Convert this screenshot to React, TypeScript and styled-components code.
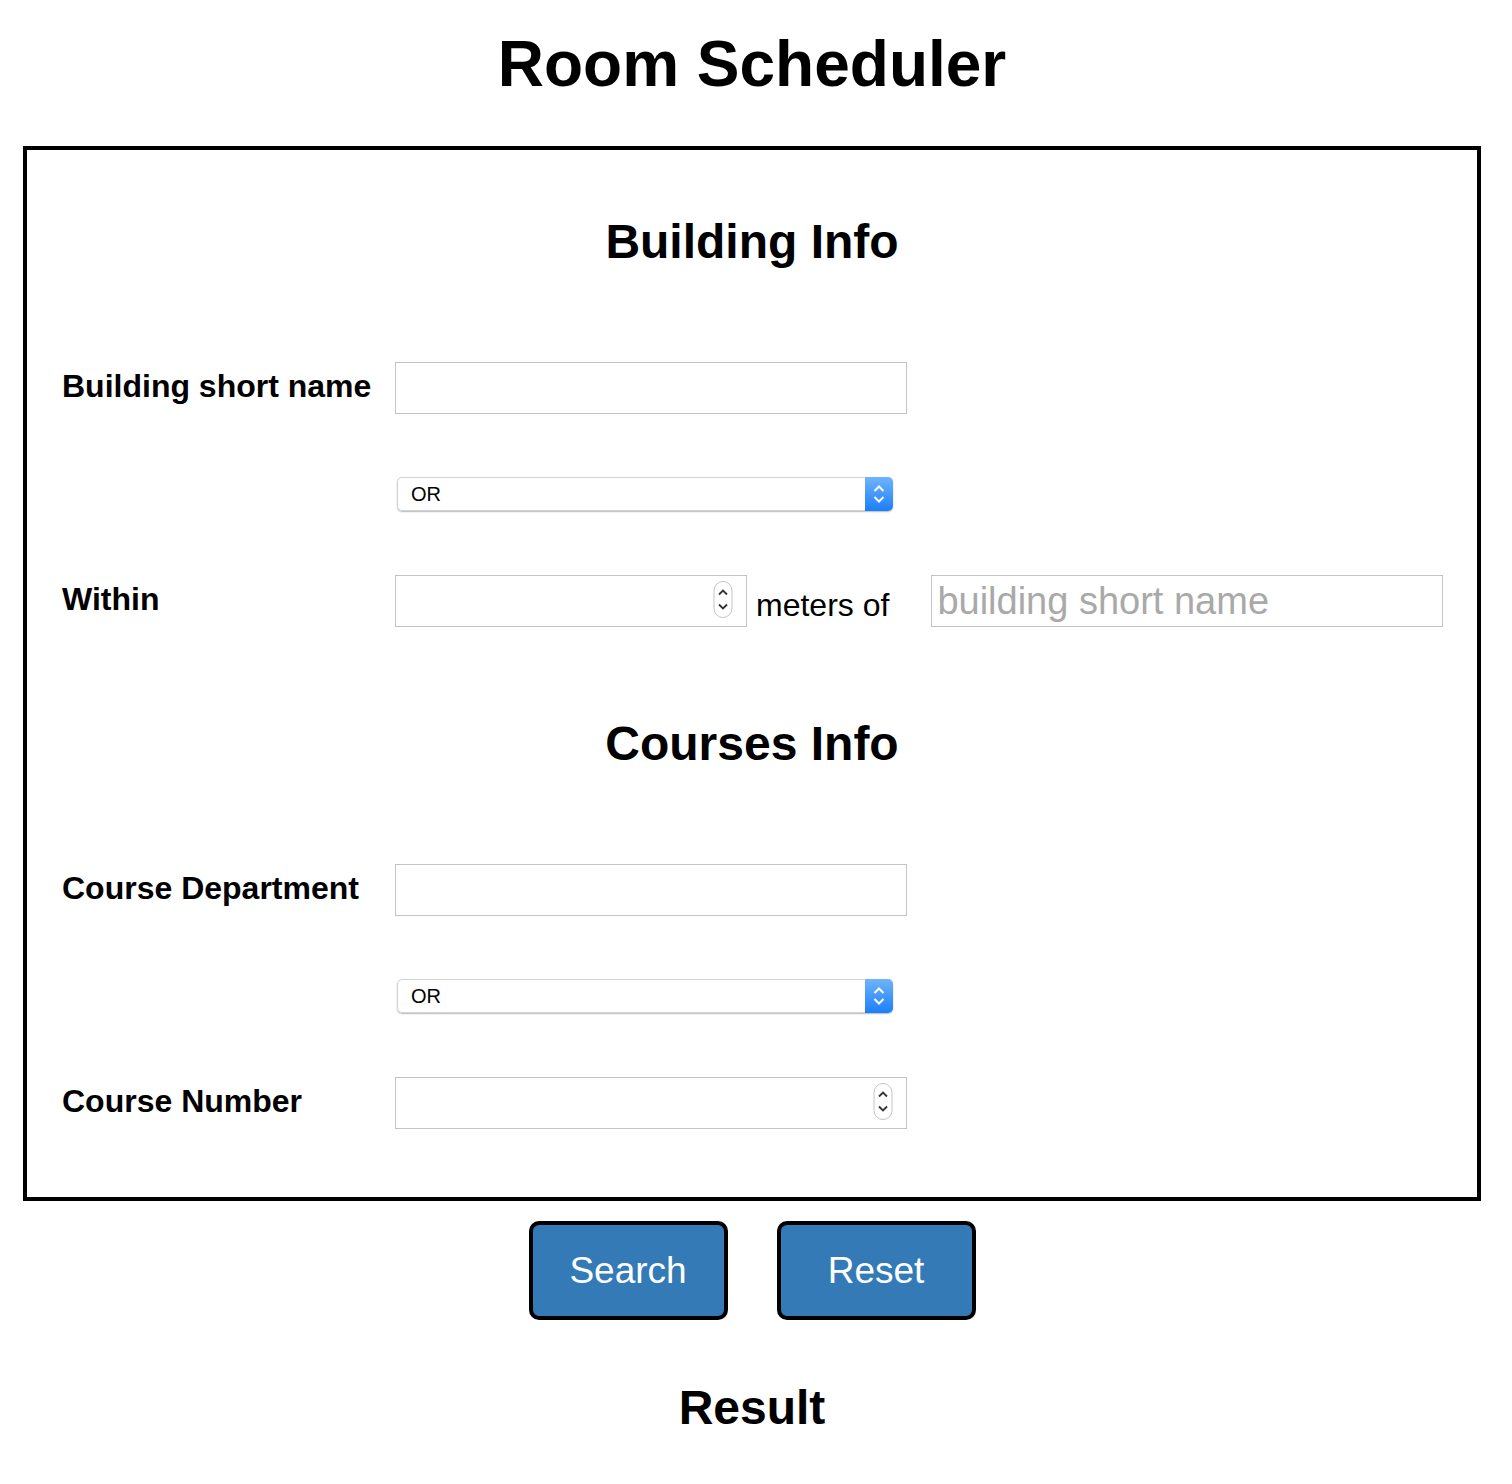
import React, { ReactElement } from 'react';
import styled, { createGlobalStyle } from 'styled-components';

const GlobalStyle = createGlobalStyle`
  html, body {
    margin: 0;
    padding: 0;
    background: #ffffff;
  }
  body {
    font-family: 'Liberation Sans', Arial, sans-serif;
    color: #000000;
  }
`;

const Spinner = (): ReactElement => (
  <SpinnerBox>
    <svg width="20" height="37" viewBox="0 0 20 37">
      <rect x="1" y="0.5" width="18" height="36" rx="9" fill="#ffffff" stroke="#c4c4c4" />
      <path d="M6 13.5 L10 9.5 L14 13.5" fill="none" stroke="#333333" strokeWidth="1.8" />
      <path d="M6 23.5 L10 27.5 L14 23.5" fill="none" stroke="#333333" strokeWidth="1.8" />
    </svg>
  </SpinnerBox>
);

const OrSelect = (): ReactElement => (
  <SelectWrap>
    <NativeSelect defaultValue="OR">
      <option value="OR">OR</option>
      <option value="AND">AND</option>
    </NativeSelect>
    <SelectArrows>
      <svg width="28" height="34" viewBox="0 0 28 34">
        <path d="M9.5 14 L14 9.5 L18.5 14" fill="none" stroke="#ffffff" strokeWidth="2" />
        <path d="M9.5 20 L14 24.5 L18.5 20" fill="none" stroke="#ffffff" strokeWidth="2" />
      </svg>
    </SelectArrows>
  </SelectWrap>
);

const App = (): ReactElement => {
  return (
    <Page>
      <GlobalStyle />
      <PageTitle>Room Scheduler</PageTitle>
      <Frame>
        <SectionTitle $top={64}>Building Info</SectionTitle>
        <FormRow $gap={92}>
          <FieldLabel>Building short name</FieldLabel>
          <TextInput type="text" />
        </FormRow>
        <FormRow $gap={63}>
          <FieldLabel />
          <OrSelect />
        </FormRow>
        <FormRow $gap={64}>
          <FieldLabel>Within</FieldLabel>
          <NumberWrap $width={352}>
            <TextInput type="text" $width={352} />
            <Spinner />
          </NumberWrap>
          <MetersText>meters of</MetersText>
          <TextInput type="text" placeholder="building short name" $big />
        </FormRow>

        <SectionTitle $top={89}>Courses Info</SectionTitle>
        <FormRow $gap={92}>
          <FieldLabel>Course Department</FieldLabel>
          <TextInput type="text" />
        </FormRow>
        <FormRow $gap={63}>
          <FieldLabel />
          <OrSelect />
        </FormRow>
        <FormRow $gap={64}>
          <FieldLabel>Course Number</FieldLabel>
          <NumberWrap $width={512}>
            <TextInput type="text" />
            <Spinner />
          </NumberWrap>
        </FormRow>
      </Frame>
      <ButtonBar>
        <ActionButton type="button">Search</ActionButton>
        <ActionButton type="button">Reset</ActionButton>
      </ButtonBar>
      <ResultTitle>Result</ResultTitle>
    </Page>
  );
};

const Page = styled.div`
  width: 1512px;
  padding-bottom: 40px;
`;

const PageTitle = styled.h1`
  margin: 27px 8px 45px 0;
  font-size: 64px;
  line-height: 74px;
  font-weight: 700;
  text-align: center;
`;

const Frame = styled.div`
  margin: 0 31px 0 23px;
  border: 4px solid #000000;
  padding: 0 35px 68px;
`;

const SectionTitle = styled.h2<{ $top: number }>`
  margin: ${({ $top }) => $top}px 0 0;
  font-size: 48px;
  line-height: 56px;
  font-weight: 700;
  text-align: center;
`;

const FormRow = styled.div<{ $gap: number }>`
  display: flex;
  align-items: center;
  white-space: nowrap;
  margin-top: ${({ $gap }) => $gap}px;

  & > * {
    flex-shrink: 0;
  }
`;

const FieldLabel = styled.label`
  flex: 0 0 333px;
  font-size: 32px;
  font-weight: 700;
  line-height: 37px;
  padding-bottom: 4px;
`;

const TextInput = styled.input<{ $width?: number; $big?: boolean }>`
  box-sizing: border-box;
  width: ${({ $width }) => $width ?? 512}px;
  height: 52px;
  margin: 0;
  border: 1px solid #c4c4c4;
  border-radius: 0;
  padding: 0 5px;
  background: #ffffff;
  font-family: 'Liberation Sans', Arial, sans-serif;
  font-size: ${({ $big }) => ($big ? '38px' : '32px')};
  outline: none;

  &::placeholder {
    color: #a9a9a9;
  }
`;

const NumberWrap = styled.div<{ $width: number }>`
  position: relative;
  width: ${({ $width }) => $width}px;
  height: 52px;
`;

const SpinnerBox = styled.div`
  position: absolute;
  right: 14px;
  top: 6px;
  width: 20px;
  height: 37px;
  line-height: 0;
`;

const MetersText = styled.span`
  font-size: 32px;
  line-height: 37px;
  margin: 9px 42px 0 9px;
`;

const SelectWrap = styled.div`
  position: relative;
  margin-left: 2px;
  width: 496px;
  height: 34px;
  border-radius: 5px;
  box-shadow: 0 1px 1.5px rgba(0, 0, 0, 0.28);
`;

const NativeSelect = styled.select`
  appearance: none;
  -webkit-appearance: none;
  box-sizing: border-box;
  width: 100%;
  height: 34px;
  margin: 0;
  padding: 0 0 0 13px;
  border: 1px solid #d2d2d2;
  border-radius: 5px;
  background: #ffffff;
  font-family: 'Liberation Sans', Arial, sans-serif;
  font-size: 20px;
  color: #000000;
  outline: none;
`;

const SelectArrows = styled.div`
  position: absolute;
  top: 0;
  right: 0;
  width: 28px;
  height: 34px;
  border-radius: 0 5px 5px 0;
  background: linear-gradient(#6fb4fb, #1b7ff8);
  line-height: 0;
  pointer-events: none;
`;

const ButtonBar = styled.div`
  display: flex;
  justify-content: center;
  gap: 49px;
  margin: 20px 8px 0 0;
`;

const ActionButton = styled.button`
  box-sizing: border-box;
  width: 199px;
  height: 99px;
  border: 4px solid #000000;
  border-radius: 10px;
  background: #337ab7;
  color: #ffffff;
  font-family: 'Liberation Sans', Arial, sans-serif;
  font-size: 37px;
  padding: 0;
  cursor: pointer;
`;

const ResultTitle = styled.h2`
  margin: 60px 8px 0 0;
  font-size: 48px;
  line-height: 56px;
  font-weight: 700;
  text-align: center;
`;

export default App;
